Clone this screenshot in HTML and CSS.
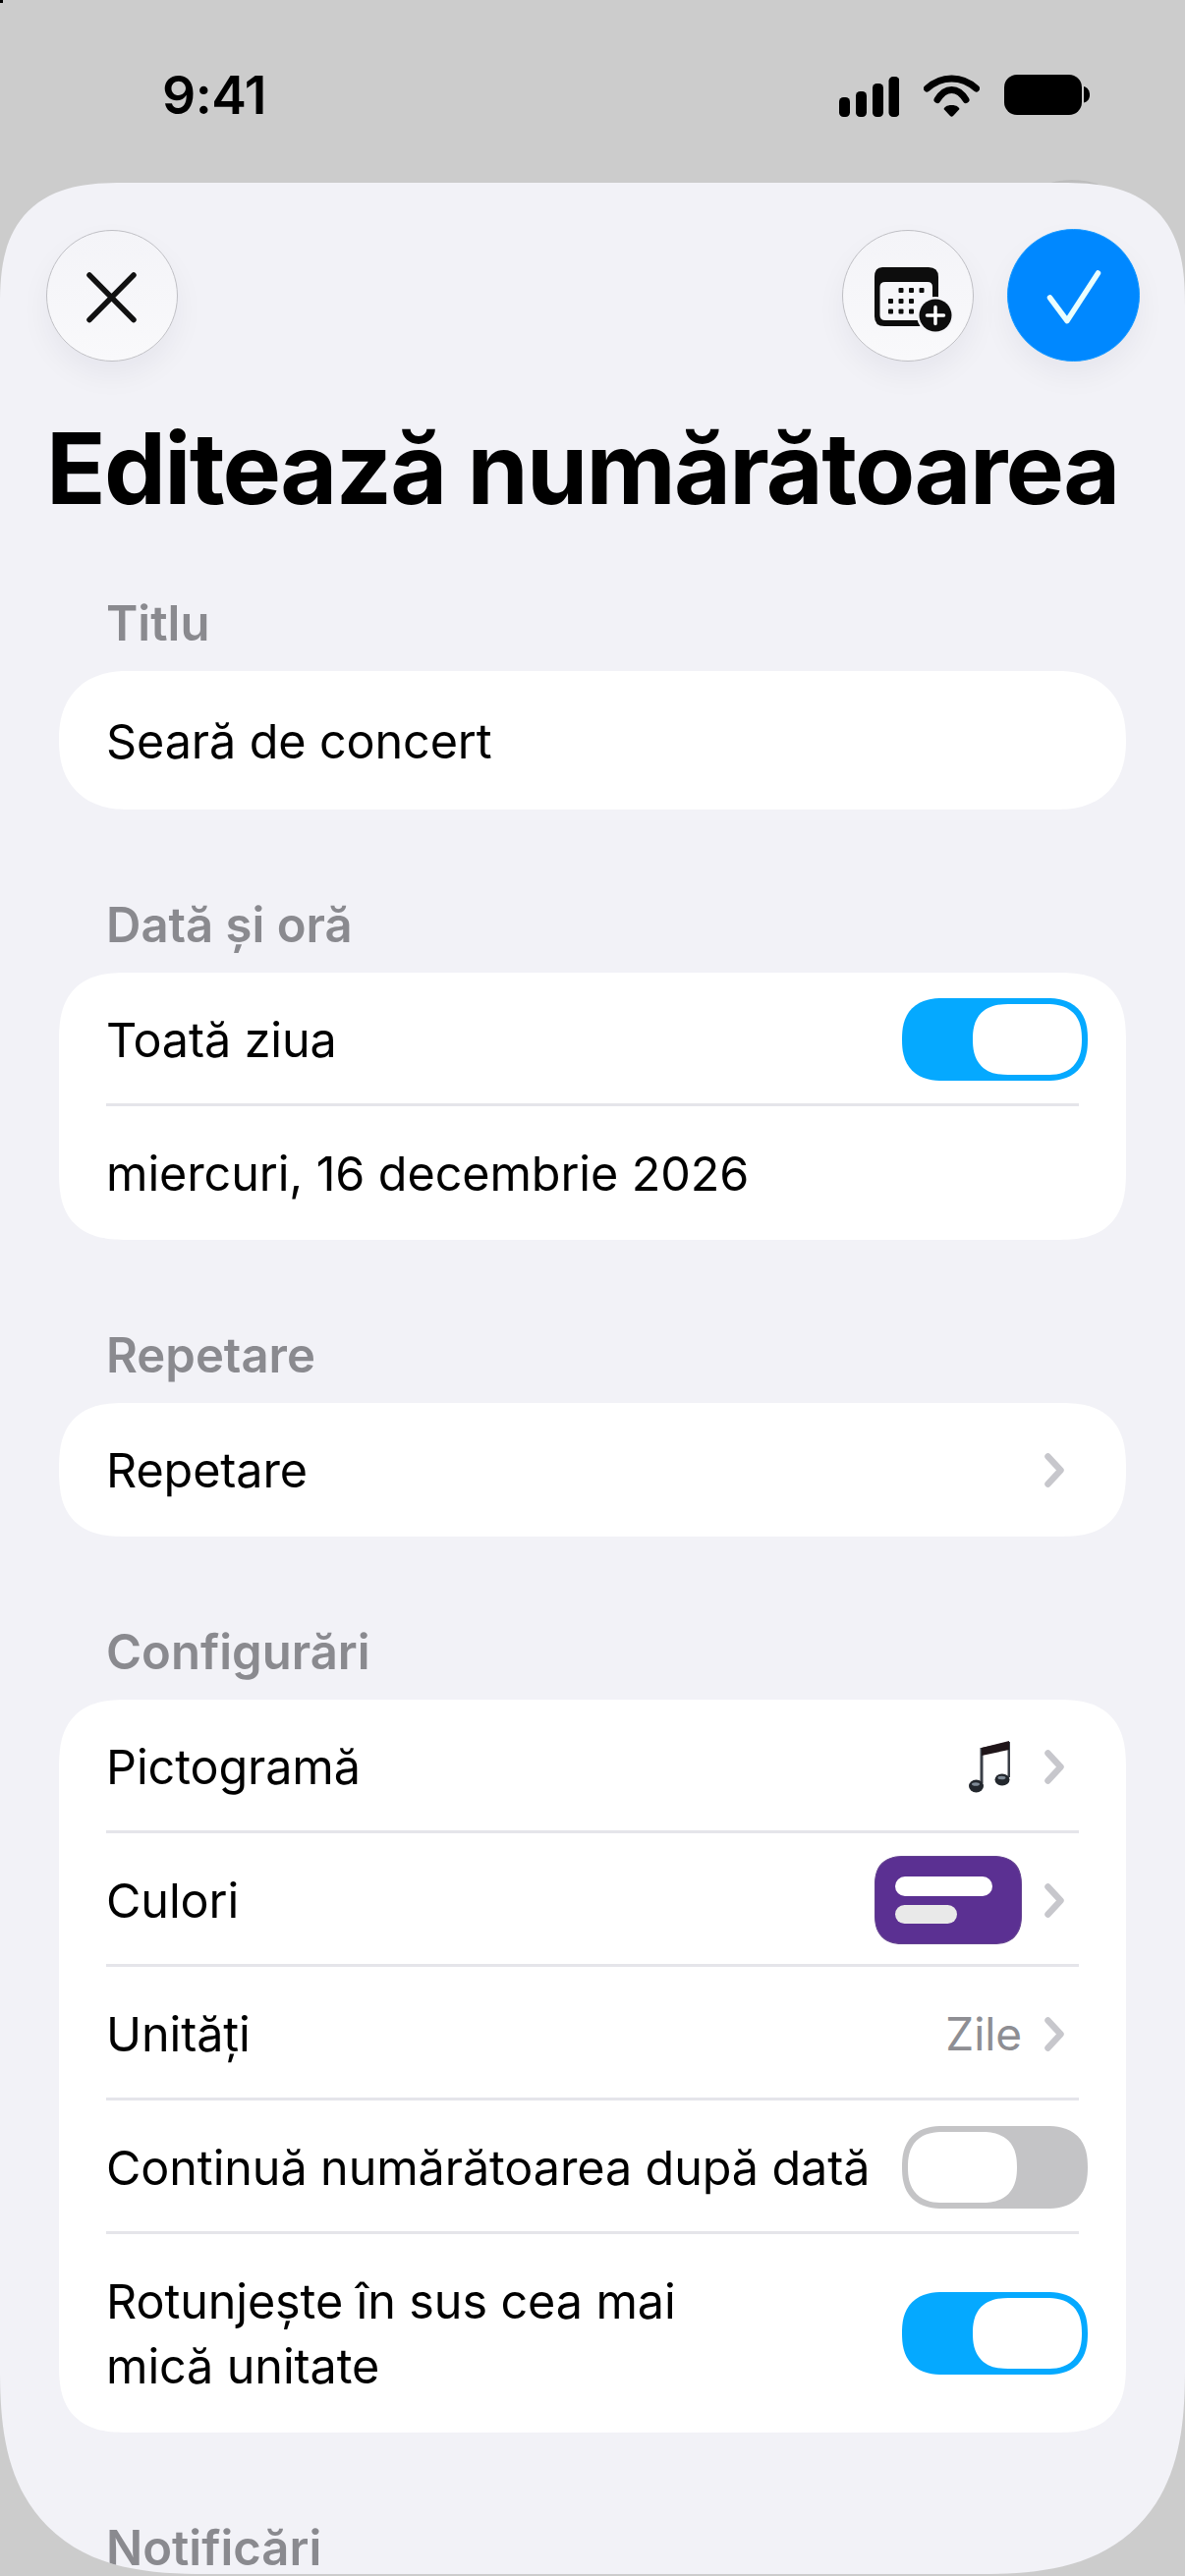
FILE: index.html
```html
<!DOCTYPE html>
<html lang="ro">
<head>
<meta charset="utf-8">
<title>Editează numărătoarea</title>
<link rel="stylesheet" href="styles.css">
</head>
<body>
<div class="screen">
  <header class="status">
    <span class="time">9:41</span>
    <div class="status-icons">
      <svg class="signal" viewBox="0 0 61 41" width="61" height="41"><rect x="0" y="21" width="11" height="20" rx="4.5"/><rect x="17" y="15" width="11" height="26" rx="4.5"/><rect x="34" y="7" width="11" height="34" rx="4.5"/><rect x="50.5" y="0" width="11" height="41" rx="4.5"/></svg>
      <svg class="wifi" viewBox="0 0 57 43" width="57" height="43"><path d="M3.500 14C18 0.500 39 0.500 53.500 14" fill="none" stroke="#000" stroke-width="7" stroke-linecap="round"/><path d="M14 25.500C22 12 35 12 43 25.500" fill="none" stroke="#000" stroke-width="7" stroke-linecap="round"/><path d="M28.500 31C23 31 21 33.500 20.500 35L27 42Q28.500 43.500 30 42L36.500 35C36 33.500 34 31 28.500 31Z"/></svg>
      <svg class="battery" viewBox="0 0 87 41" width="87" height="41"><rect x="0" y="0" width="79" height="41" rx="13"/><path d="M81 12C85 13 87 16.500 87 20.500C87 24.500 85 27.500 81 28.500Z"/></svg>
    </div>
  </header>
  <main class="sheet">
    <nav class="nav">
      <button class="round">
        <svg viewBox="0 0 134 134" width="134" height="134"><path d="M44 46L89 91.500M89 46L44 91.500" fill="none" stroke="#111" stroke-width="5.500" stroke-linecap="round"/></svg>
      </button>
      <div class="nav-right">
        <button class="round">
          <svg viewBox="0 0 134 134" width="134" height="134">
            <path d="M41 38H88Q98 38 98 48V88Q98 98 88 98H43Q33 98 33 88V48Q33 38 41 38Z" fill="#0d0d0d"/>
            <path d="M44 53H87Q92 53 92 58V87Q92 92 87 92H44Q38.500 92 38.500 87V58Q38.500 53 44 53Z" fill="#f6f6f9"/>
            <g fill="#0d0d0d"><rect x="57.500" y="59" width="5" height="5" rx="1"/><rect x="68" y="59" width="5" height="5" rx="1"/><rect x="78.500" y="59" width="5" height="5" rx="1"/><rect x="47" y="70" width="5" height="5" rx="1"/><rect x="57.500" y="70" width="5" height="5" rx="1"/><rect x="68" y="70" width="5" height="5" rx="1"/><rect x="47" y="80.500" width="5" height="5" rx="1"/><rect x="57.500" y="80.500" width="5" height="5" rx="1"/><rect x="68" y="80.500" width="5" height="5" rx="1"/></g>
            <circle cx="95" cy="87" r="19" fill="#f6f6f9"/><circle cx="95" cy="87" r="16.500" fill="#0d0d0d"/>
            <path d="M95 78.500V95.500M86.500 87H103.500" stroke="#fff" stroke-width="3.500" stroke-linecap="round"/>
          </svg>
        </button>
        <button class="round confirm">
          <svg viewBox="0 0 135 135" width="135" height="135"><path d="M43.500 70L61 93.500L92.500 45" fill="none" stroke="#eafffe" stroke-width="5.500" stroke-linecap="round" stroke-linejoin="round"/></svg>
        </button>
      </div>
    </nav>
    <h1 class="title">Editează numărătoarea</h1>

    <section class="section">
      <h2 class="label">Titlu</h2>
      <div class="card field-card"><div class="row field"><span>Seară de concert</span></div></div>
    </section>

    <section class="section">
      <h2 class="label">Dată și oră</h2>
      <div class="card">
        <div class="row"><span>Toată ziua</span><span class="toggle on"></span></div>
        <div class="row"><span>miercuri, 16 decembrie 2026</span></div>
      </div>
    </section>

    <section class="section">
      <h2 class="label">Repetare</h2>
      <div class="card">
        <div class="row"><span>Repetare</span><span class="trail"><svg class="chev" viewBox="0 0 20 35" width="20" height="35"><path d="M3.500 3.500L16.500 17.500L3.500 31.500" fill="none" stroke="#c7c7cc" stroke-width="6.500" stroke-linecap="round" stroke-linejoin="round"/></svg></span></div>
      </div>
    </section>

    <section class="section">
      <h2 class="label">Configurări</h2>
      <div class="card">
        <div class="row"><span>Pictogramă</span><span class="trail">
          <svg class="note" viewBox="0 0 42 53" width="42" height="53">
            <path d="M13 7L41 0V5L13 13Z" fill="#2a1c22"/>
            <path d="M13 7V43M41 1V37" stroke="#3a3f47" stroke-width="3" fill="none"/>
            <path d="M13 7L41 1V9L13 15Z" fill="#1f1519"/>
            <ellipse cx="7.500" cy="46" rx="7.500" ry="6.500" fill="#23272d"/><ellipse cx="34" cy="39.500" rx="7.500" ry="6" fill="#23272d"/>
            <ellipse cx="7" cy="44" rx="4" ry="1.800" fill="#7f8a96"/><ellipse cx="33.500" cy="37.500" rx="4" ry="1.800" fill="#7f8a96"/>
          </svg>
          <svg class="chev" viewBox="0 0 20 35" width="20" height="35"><path d="M3.500 3.500L16.500 17.500L3.500 31.500" fill="none" stroke="#c7c7cc" stroke-width="6.500" stroke-linecap="round" stroke-linejoin="round"/></svg></span></div>
        <div class="row"><span>Culori</span><span class="trail">
          <span class="swatch"><span class="bar bar-a"></span><span class="bar bar-b"></span></span>
          <svg class="chev" viewBox="0 0 20 35" width="20" height="35"><path d="M3.500 3.500L16.500 17.500L3.500 31.500" fill="none" stroke="#c7c7cc" stroke-width="6.500" stroke-linecap="round" stroke-linejoin="round"/></svg></span></div>
        <div class="row"><span>Unități</span><span class="trail"><span class="value">Zile</span>
          <svg class="chev" viewBox="0 0 20 35" width="20" height="35"><path d="M3.500 3.500L16.500 17.500L3.500 31.500" fill="none" stroke="#c7c7cc" stroke-width="6.500" stroke-linecap="round" stroke-linejoin="round"/></svg></span></div>
        <div class="row"><span>Continuă numărătoarea după dată</span><span class="toggle"></span></div>
        <div class="row tall"><span class="wrap">Rotunjește în sus cea mai mică unitate</span><span class="toggle on"></span></div>
      </div>
    </section>

    <section class="section">
      <h2 class="label">Notificări</h2>
    </section>
  </main>
</div>
</body>
</html>
```

FILE: styles.css
```css
* { box-sizing: border-box; }
html, body { margin: 0; padding: 0; }
body { width: 1206px; height: 2622px; overflow: hidden; background: #cccccc; font-family: Inter, "Noto Sans", sans-serif; color: #000; }
.screen { position: relative; width: 1206px; height: 2622px; display: flex; flex-direction: column; }
.screen::before { content: ""; position: absolute; left: 1050px; top: 183px; width: 82px; height: 40px; border-radius: 50%; background: #bdbdbd; }
.screen::after { content: ""; position: absolute; left: 0; top: 0; width: 3px; height: 3px; background: #000; }

.status { height: 186px; flex: none; display: flex; justify-content: space-between; align-items: flex-start; padding: 0 97px 0 165px; }
.time { font-size: 53.5px; font-weight: 600; line-height: 60px; margin-top: 67px; letter-spacing: -0.5px; }
.status-icons { display: flex; align-items: flex-start; margin-top: 76px; }
.status-icons svg { display: block; }
.signal { margin-top: 2px; margin-right: 25px; }
.wifi { margin-right: 25px; }

.sheet { position: relative; flex: none; width: 1206px; height: 2434px; background: #f2f2f7; overflow: hidden; border-radius: 125px 125px 210px 210px; corner-shape: superellipse(1.4); padding: 47px 0 0; }

.nav { display: flex; justify-content: space-between; align-items: center; padding: 0 46px 0 47px; height: 135px; }
.nav-right { display: flex; gap: 34px; align-items: center; }
.round { width: 134px; height: 134px; padding: 0; border: 1.5px solid #bfbfc4; border-radius: 50%; background: linear-gradient(#f4f4f8, #f9f9fb); box-shadow: 0 14px 30px rgba(0, 0, 60, 0.05); display: flex; align-items: center; justify-content: center; }
.round svg { display: block; flex: none; }
.confirm { width: 135px; height: 135px; background: #0088ff; border-color: #1a9bff; }

.title { margin: 54px 0 74px; padding-left: 47px; font-size: 100px; font-weight: 700; line-height: 110px; height: 110px; letter-spacing: -1.75px; white-space: nowrap; }

.section { margin-bottom: 89px; padding: 0 60px; }
.label { margin: 0 0 19px; padding-left: 48px; font-size: 49px; font-weight: 600; line-height: 58px; color: #8a8a8f; }
.card { background: #fff; border-radius: 70px; corner-shape: superellipse(1.4); overflow: hidden; }
.field-card { border-radius: 70px; corner-shape: superellipse(1.2); }
.row { position: relative; height: 136px; display: flex; align-items: center; justify-content: space-between; padding: 0 39px 0 48px; font-size: 48.500px; line-height: 66px; letter-spacing: -0.1px; white-space: nowrap; }
.row > span:first-child { margin-top: 2px; }
.row::after { content: ""; position: absolute; left: 48px; right: 48px; bottom: 0; height: 3px; background: #e5e5ea; }
.row:last-child::after { display: none; }
.row.tall { height: 202px; }
.row.field { height: 141px; }
.wrap { white-space: normal; width: 640px; }

.trail { display: flex; align-items: center; gap: 23px; margin-right: 24px; }
.chev, .note { display: block; flex: none; }
.note { margin-right: 12px; }
.value { color: #8e8e93; font-size: 46px; }

.toggle { position: relative; flex: none; display: block; width: 189px; height: 84px; border-radius: 42px; corner-shape: superellipse(1.3); background: #c4c4c6; }
.toggle::after { content: ""; position: absolute; left: 6px; top: 6px; width: 111px; height: 72px; border-radius: 36px; corner-shape: superellipse(1.3); background: #fff; }
.toggle.on { background: #05a9ff; }
.toggle.on::after { left: 72px; }

.swatch { flex: none; width: 150px; height: 90px; border-radius: 30px; corner-shape: superellipse(1.3); background: #5b3092; border: 1.5px solid #63408f; display: flex; flex-direction: column; gap: 9px; justify-content: center; padding-left: 20px; }
.bar { display: block; height: 20px; border-radius: 10px; }
.bar-a { width: 99px; background: #fff; }
.bar-b { width: 63px; height: 19px; background: #e9e9e9; }
```
